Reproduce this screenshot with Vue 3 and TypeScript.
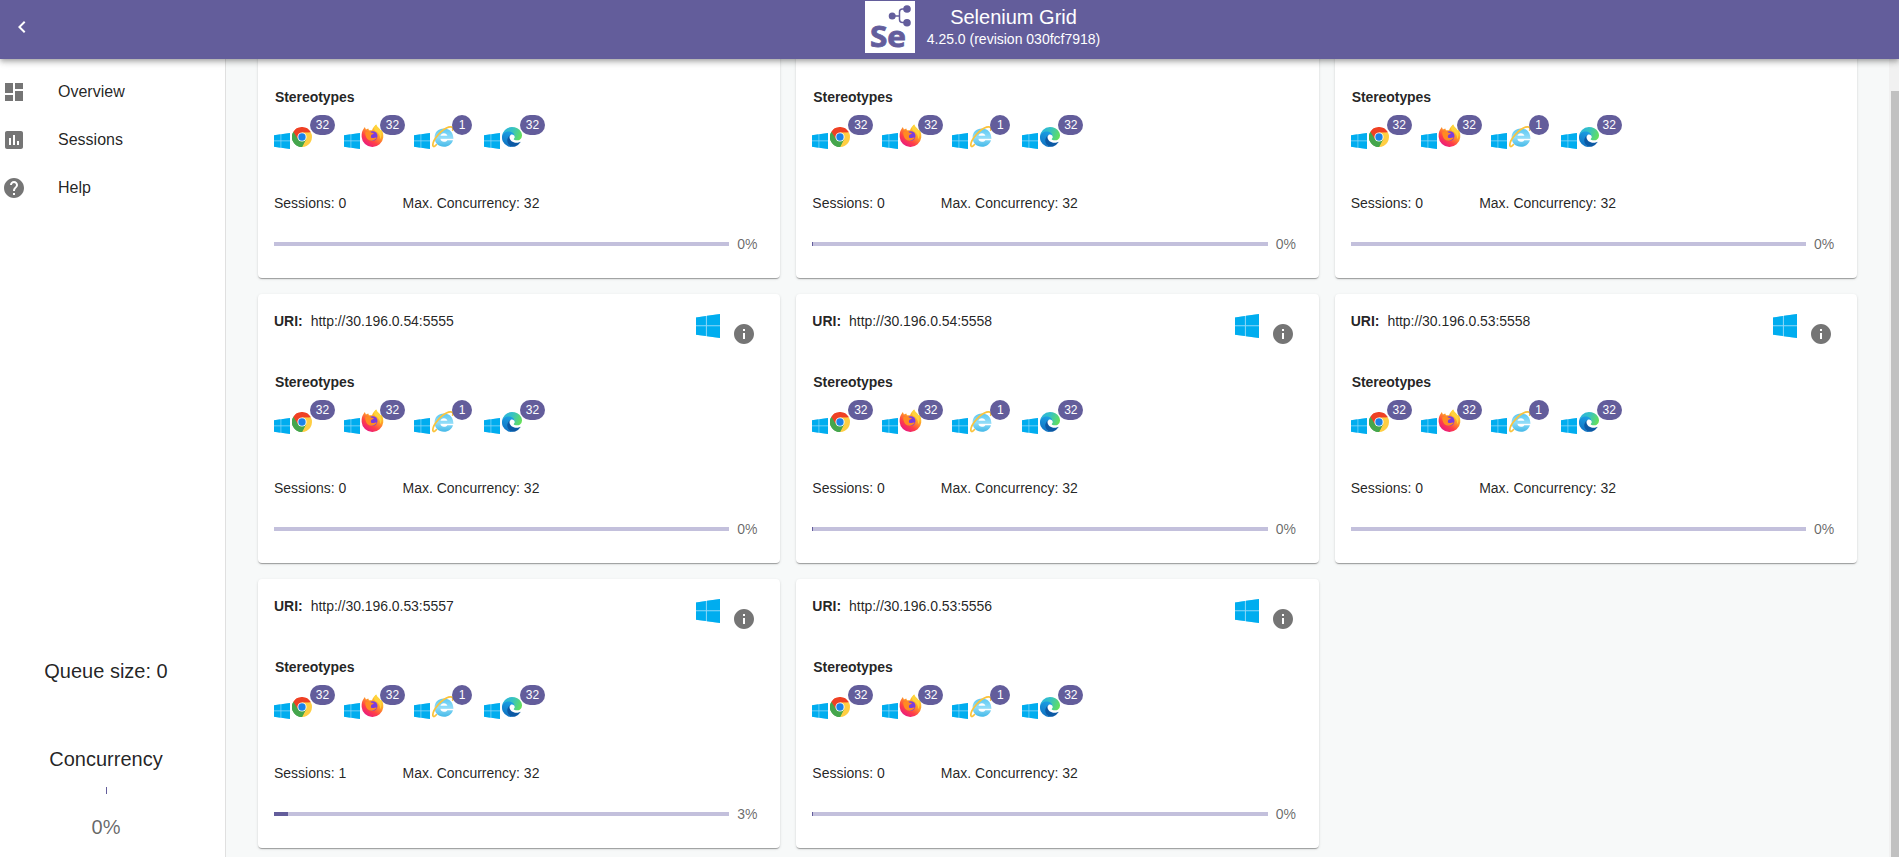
<script setup lang="ts">
interface GridNode {
  uri: string
  sessions: number
  max: number
  load: number
  fill: number
}

const node = (uri: string, fill = 0, sessions = 0, load = 0): GridNode => ({
  uri,
  sessions,
  max: 32,
  load,
  fill,
})

// The first row is scrolled under the app bar, so its heading line stays empty.
const nodes: GridNode[] = [
  node(''),
  node('', 1),
  node(''),
  node('http://30.196.0.54:5555'),
  node('http://30.196.0.54:5558', 1),
  node('http://30.196.0.53:5558'),
  node('http://30.196.0.53:5557', 14, 1, 3),
  node('http://30.196.0.53:5556', 1),
]

const stereotypes = [
  { browser: 'chrome', slots: 32 },
  { browser: 'firefox', slots: 32 },
  { browser: 'ie', slots: 1 },
  { browser: 'edge', slots: 32 },
]

const links = [
  { label: 'Overview', icon: 'M3 13h8V3H3v10zm0 8h8v-6H3v6zm10 0h8V11h-8v10zm0-18v6h8V3h-8z' },
  { label: 'Sessions', icon: 'M19 3H5c-1.1 0-2 .9-2 2v14c0 1.1.9 2 2 2h14c1.1 0 2-.9 2-2V5c0-1.1-.9-2-2-2zM9 17H7v-7h2v7zm4 0h-2V7h2v10zm4 0h-2v-4h2v4z' },
  { label: 'Help', icon: 'M12 2C6.48 2 2 6.48 2 12s4.48 10 10 10 10-4.48 10-10S17.52 2 12 2zm1 17h-2v-2h2v2zm2.07-7.75l-.9.92C13.45 12.9 13 13.5 13 15h-2v-.5c0-1.1.45-2.1 1.17-2.83l1.24-1.26c.37-.36.59-.86.59-1.41 0-1.1-.9-2-2-2s-2 .9-2 2H8c0-2.21 1.79-4 4-4s4 1.79 4 4c0 .88-.36 1.68-.93 2.25z' },
]
</script>

<template>
  <div class="page">
    <svg class="defs" width="0" height="0" aria-hidden="true">
      <defs>
        <linearGradient id="ff-body" x1="0.8" y1="0.1" x2="0.2" y2="1">
          <stop offset="0" stop-color="#ffe234" />
          <stop offset="0.35" stop-color="#ff9a27" />
          <stop offset="0.65" stop-color="#ff4046" />
          <stop offset="1" stop-color="#e5118c" />
        </linearGradient>
        <linearGradient id="ie-body" x1="0" y1="0" x2="0" y2="1">
          <stop offset="0" stop-color="#5cc8f2" />
          <stop offset="0.5" stop-color="#8fdcf8" />
          <stop offset="1" stop-color="#45b9e8" />
        </linearGradient>
        <linearGradient id="edge-top" x1="0" y1="0.3" x2="1" y2="0.6">
          <stop offset="0" stop-color="#2bb3df" />
          <stop offset="0.45" stop-color="#36c2c4" />
          <stop offset="1" stop-color="#65e05a" />
        </linearGradient>
        <linearGradient id="edge-left" x1="0.3" y1="0" x2="0" y2="1">
          <stop offset="0" stop-color="#1b9de2" />
          <stop offset="1" stop-color="#0e6cbd" />
        </linearGradient>
        <symbol id="windows" viewBox="0 0 24 24">
          <path fill="#8fd9f8" d="M0 3.400 24 0v24L0 20.700z" />
          <path fill="#00adef" d="M0 3.400 9.900 2v9.200H0zM10.900 1.850 24 0v11.200H10.900zM0 12.300h9.900V22L0 20.700zM10.900 12.300H24V24l-13.100-1.850z" />
        </symbol>
        <symbol id="chrome" viewBox="0 0 24 24">
          <path fill="#ef4124" d="M12 12 1.6 6A12 12 0 0 1 22.4 6z" />
          <path fill="#ffce43" d="M12 12V6.4h10.6A12 12 0 0 1 12 24l-1-1z" />
          <path fill="#45a64c" d="M12 12 1.6 6A12 12 0 0 0 12 24l4.8-9.2z" />
          <path fill="#ef4124" d="M1.6 6 7 14.6 12 6.4h10.6L18 2H5z" />
          <path fill="#45a64c" d="m1.6 6 5.6 9L12 17.5l4.7-2.7L12 24A12 12 0 0 1 1.6 6z" />
          <circle cx="12" cy="12" r="5.5" fill="#fff" />
          <circle cx="12" cy="12" r="4.4" fill="#1a83e8" />
        </symbol>
        <symbol id="firefox" viewBox="0 0 24 24">
          <path fill="url(#ff-body)" d="M2.3 5.3 4 2.7l1.1 2.6 2.5-1.2.7 2 3.200-.2C12.400 3.200 14 1.500 15.800 0c.6 2.500 3.600 4 5 6.400l.5-1.100c1.700 2.400 2.200 5.300 1.900 8.200A11.300 11.300 0 0 1 .7 13C.5 10 1 7.400 2.300 5.300z" />
          <circle cx="12.200" cy="12" r="5" fill="#7a3bdc" />
          <path fill="#ff8b22" d="M4.400 8.100c2.400-1.200 5-.9 6.800.4l2.200.4c-.2 1.100-1.900 1.400-2.800 2.200-1 2.200.4 3.500 2.500 3 1.400-.3 2.300-.8 3.300-.2-1.400 2.200-4.600 4-7.900 2.600-3.100-1.500-4.100-4.800-4.100-8.400z" />
          <path fill="#ffd33c" d="M15.800 0c.6 2.500 3.600 4 5 6.800 1.100 2.700.7 6.400-.8 8.700.2-4.400-1.500-6.800-5.600-9.200-1.400-1.600-.5-4.700 1.400-6.300z" />
        </symbol>
        <symbol id="ie" viewBox="0 0 24 24">
          <path fill="url(#ie-body)" d="M13 2.600c6.200 0 10.400 4.300 10.400 11.400H9.100c.4 2.100 1.900 3.300 4 3.300 1.700 0 2.900-.6 3.600-1.800h6.200c-1.300 4.300-5 7.100-9.800 7.100-6.200 0-10.300-4-10.300-10S6.900 2.600 13 2.600zm0 5.200c-2 0-3.300 1-3.800 2.800h7.600c-.5-1.800-1.800-2.800-3.800-2.800z" />
          <path fill="none" stroke="#fbc33c" stroke-width="1.900" stroke-linecap="round" d="M4.700 20.500C2.800 22.800.9 23.200.9 20.500 1.100 14.400 10.600 3.700 18 1.300c4-1.100 5.400.4 4.600 3.200" />
        </symbol>
        <symbol id="edge" viewBox="0 0 256 256">
          <path fill="#0c59a4" transform="translate(-4.630 -4.920)" d="M235.680 195.460a93.730 93.730 0 0 1-10.540 4.710 101.870 101.870 0 0 1-35.900 6.460c-47.320 0-88.540-32.550-88.540-74.320A31.480 31.480 0 0 1 117.130 105c-42.800 1.800-53.800 46.400-53.800 72.530 0 73.880 68.090 81.370 82.760 81.370 7.910 0 19.840-2.300 27-4.560l1.310-.44a128.340 128.340 0 0 0 66.600-52.800 4 4 0 0 0-5.320-5.640z" />
          <path fill="url(#edge-left)" d="M105.730 241.420A79.200 79.200 0 0 1 83 220.080a80.720 80.720 0 0 1 29.490-120.150c3.190-1.500 8.640-4.210 15.890-4.080a33 33 0 0 1 26.190 13.250 31.880 31.880 0 0 1 6.360 18.660c0-.21 25.020-81.390-81.830-81.390C34.200 46.370 0 88.980 0 126.370a130.310 130.310 0 0 0 9.380 56 128 128 0 0 0 156.380 67.110 75.550 75.550 0 0 1-60.030-8.060z" />
          <path fill="url(#edge-top)" d="M152.330 148.860c-.83 1.070-3.380 2.550-3.380 5.770 0 2.660 1.730 5.220 4.810 7.370 14.630 10.180 42.230 8.830 42.300 8.830a60.550 60.550 0 0 0 30.750-8.460A62.410 62.410 0 0 0 256 108.640c.27-22.720-8.120-37.830-11.510-44.520C222.980 22.070 176.550 0 126.060 0A128 128 0 0 0 0 126.210c.48-37.490 37.760-67.770 81.830-67.770 3.570 0 23.930.35 42.840 10.280 16.670 8.750 25.400 19.320 31.470 29.800 6.300 10.880 7.420 24.620 7.420 30.100s-2.800 13.590-11.230 20.240z" />
        </symbol>
      </defs>
    </svg>

    <header class="topbar">
      <button class="collapse" aria-label="Collapse menu">
        <svg viewBox="0 0 24 24"><path d="M15.41 7.41 14 6l-6 6 6 6 1.41-1.41L10.83 12z" /></svg>
      </button>
      <div class="brand">
        <svg class="logo" viewBox="0 0 50 52">
          <rect width="50" height="52" fill="#fff" />
          <g fill="none" stroke="#635d9c" stroke-width="1.5">
            <path d="M27 15h7M42 8h-4.500q-3 0-3 3v7.500q0 3 3 3H42" />
          </g>
          <g fill="#635d9c">
            <circle cx="27.200" cy="15" r="3.500" />
            <circle cx="42" cy="8" r="3.800" />
            <circle cx="42" cy="21.700" r="3.800" />
            <text x="5" y="45.500" textLength="36" lengthAdjust="spacingAndGlyphs">Se</text>
          </g>
        </svg>
        <div class="titles">
          <h1>Selenium Grid</h1>
          <p>4.25.0 (revision 030fcf7918)</p>
        </div>
      </div>
    </header>

    <div class="body">
      <aside class="sidebar">
        <nav>
          <a v-for="link in links" :key="link.label" class="link">
            <svg viewBox="0 0 24 24"><path :d="link.icon" /></svg>
            <span>{{ link.label }}</span>
          </a>
        </nav>
        <section class="summary">
          <div class="queue">Queue size: 0</div>
          <div class="concurrency">Concurrency</div>
          <div class="tick"></div>
          <div class="percent">0%</div>
        </section>
      </aside>

      <main class="content">
        <div class="grid">
          <article v-for="(n, i) in nodes" :key="i" class="card">
            <div class="head">
              <template v-if="n.uri">
                <p class="uri"><b>URI:</b><span>{{ n.uri }}</span></p>
                <svg class="os"><use href="#windows" /></svg>
                <svg class="info" viewBox="0 0 24 24">
                  <path d="M12 2C6.48 2 2 6.48 2 12s4.480 10 10 10 10-4.480 10-10S17.520 2 12 2zm1 15h-2v-6h2v6zm0-8h-2V7h2v2z" />
                </svg>
              </template>
            </div>
            <h2>Stereotypes</h2>
            <div class="stereotypes">
              <div v-for="s in stereotypes" :key="s.browser" class="stereotype">
                <svg class="platform"><use href="#windows" /></svg>
                <svg class="browser" :class="s.browser"><use :href="'#' + s.browser" /></svg>
                <span class="badge">{{ s.slots }}</span>
              </div>
            </div>
            <div class="stats">
              <span>Sessions: {{ n.sessions }}</span>
              <span>Max. Concurrency: {{ n.max }}</span>
            </div>
            <div class="load">
              <div class="track"><div class="fill" :style="{ width: n.fill + 'px' }"></div></div>
              <span>{{ n.load }}%</span>
            </div>
          </article>
        </div>
      </main>
      <div class="scrollbar"><div class="thumb"></div></div>
    </div>
  </div>
</template>

<style>
body {
  margin: 0;
  overflow: hidden;
}
</style>

<style scoped>
* {
  box-sizing: border-box;
}
h1, h2, p {
  margin: 0;
}
.page {
  display: flex;
  flex-direction: column;
  height: 857px;
  overflow: hidden;
  font-family: "Liberation Sans", Arial, sans-serif;
  color: rgba(0, 0, 0, 0.87);
  background: #f7f9f9;
}
.defs {
  position: absolute;
}
.topbar {
  position: relative;
  z-index: 2;
  display: flex;
  flex: 0 0 59px;
  background: #635d9b;
  color: #fff;
  box-shadow: 0 2px 4px -1px rgba(0, 0, 0, 0.2), 0 4px 5px rgba(0, 0, 0, 0.14), 0 1px 10px rgba(0, 0, 0, 0.12);
}
.collapse {
  width: 44px;
  height: 54px;
  padding: 0 0 0 10px;
  border: 0;
  background: none;
  text-align: left;
}
.collapse svg {
  display: block;
  width: 24px;
  height: 24px;
  fill: #fff;
}
.brand {
  display: flex;
  margin-left: 821px;
  padding-top: 1px;
}
.logo {
  width: 50px;
  height: 52px;
}
.logo text {
  font: bold 29px "Open Sans", "Liberation Sans", sans-serif;
  stroke: #635d9c;
  stroke-width: 0.8px;
}
.titles {
  width: 197px;
  text-align: center;
}
.titles h1 {
  font-size: 20px;
  font-weight: 400;
  line-height: 32px;
}
.titles p {
  font-size: 14px;
  line-height: 12px;
}
.body {
  display: flex;
  flex: 1;
  min-height: 0;
}
.sidebar {
  display: flex;
  flex-direction: column;
  width: 226px;
  background: #fff;
  border-right: 1px solid #e0e0e0;
}
nav {
  padding-top: 8px;
}
.link {
  display: flex;
  align-items: center;
  gap: 32px;
  height: 48px;
  padding: 2px 0 0 2px;
  font-size: 16px;
}
.link svg {
  width: 24px;
  height: 24px;
  fill: #757575;
}
.summary {
  display: flex;
  flex-direction: column;
  align-items: center;
  width: 212px;
  margin-top: auto;
  padding-bottom: 14px;
  font-size: 20px;
  line-height: 32px;
}
.concurrency {
  margin-top: 56px;
}
.tick {
  width: 1px;
  height: 7px;
  margin: 12px 0 17px 1px;
  background: #635d9b;
}
.percent {
  color: rgba(0, 0, 0, 0.6);
}
.content {
  flex: 1;
  min-width: 0;
  overflow: hidden;
  padding: 0 32px;
}
.grid {
  display: grid;
  grid-template-columns: repeat(3, minmax(0, 1fr));
  gap: 16px;
  margin-top: -50px;
}
.card {
  height: 269px;
  padding: 17px 16px 0;
  background: #fff;
  border-radius: 4px;
  box-shadow: 0 2px 1px -1px rgba(0, 0, 0, 0.2), 0 1px 1px rgba(0, 0, 0, 0.14), 0 1px 3px rgba(0, 0, 0, 0.12);
  font-size: 14px;
  line-height: 20px;
}
.head {
  display: flex;
  height: 61px;
}
.uri {
  flex: 1;
}
.uri span {
  margin-left: 8px;
  letter-spacing: -0.05px;
}
.os {
  width: 24px;
  height: 24px;
  margin: 3px 12px 0 0;
}
.info {
  width: 24px;
  height: 24px;
  margin: 11px 8px 0 0;
  fill: #757575;
}
.card h2 {
  padding-left: 1px;
  font-size: 14px;
  line-height: 20px;
  letter-spacing: -0.07px;
}
.stereotypes {
  display: flex;
  height: 36px;
  margin-top: 8px;
}
.stereotype {
  position: relative;
  display: flex;
  width: 70px;
}
.platform {
  width: 16px;
  height: 16px;
  margin-top: 18px;
}
.browser {
  width: 20px;
  height: 20px;
  margin: 12px 0 0 2px;
}
.firefox {
  width: 23px;
  height: 24px;
  margin: 9px 0 0 1px;
}
.ie {
  width: 22px;
  height: 22px;
  margin-top: 11px;
}
.badge {
  position: absolute;
  top: 0;
  left: 36px;
  min-width: 20px;
  height: 20px;
  padding: 0 5.800px;
  border-radius: 10px;
  background: #635d9b;
  color: #fff;
  font-size: 12px;
  line-height: 20px;
  text-align: center;
}
.ie + .badge {
  left: 38px;
}
.stats {
  display: flex;
  margin-top: 42px;
}
.stats span:first-child {
  width: 128.500px;
}
.load {
  display: flex;
  align-items: center;
  margin-top: 21px;
}
.track {
  flex: 1;
  height: 4px;
  margin-right: 8px;
  background: #c3c0dc;
}
.fill {
  height: 4px;
  background: #635d9b;
}
.load span {
  width: 27px;
  color: rgba(0, 0, 0, 0.6);
}
.scrollbar {
  width: 10px;
  padding: 32px 0 0 2px;
  background: #f1f1f1;
}
.thumb {
  height: 766px;
  background: #c1c1c1;
}
</style>
